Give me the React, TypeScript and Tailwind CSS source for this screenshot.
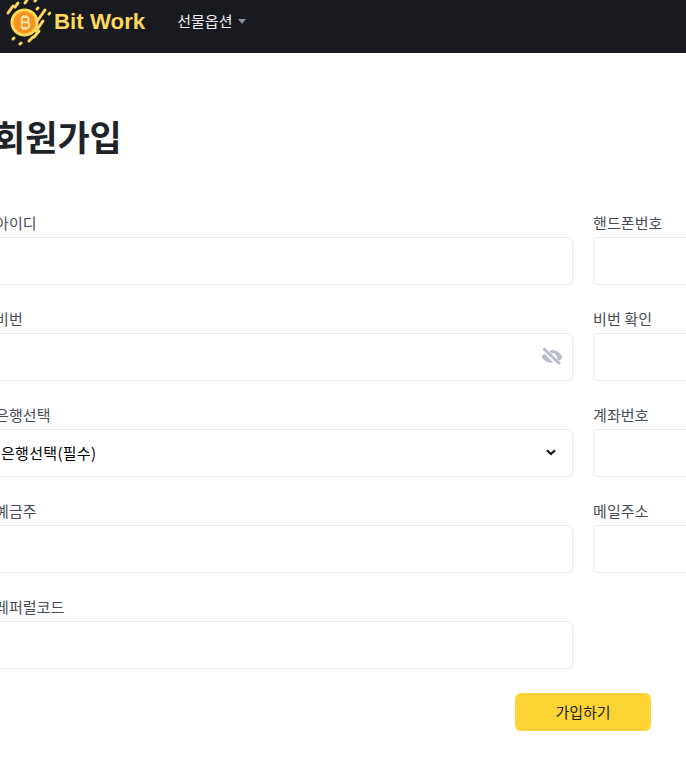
import React from "react";

const FONT = "font-['Noto_Sans_CJK_KR','Noto_Sans',sans-serif]";

function Logo() {
  return (
    <svg width="46" height="46" viewBox="0 0 46 46" className="shrink-0">
      <circle cx="19.5" cy="22.5" r="14" fill="#fcd85c" />
      <circle cx="19.5" cy="22.5" r="11" fill="#f7931a" />
      <path
        d="M16.5 17 h4.5 a2.6 2.6 0 0 1 0 5.4 h-4 m0 0 h4.6 a2.8 2.8 0 0 1 0 5.6 h-5.1 M16.8 17 v11 M18.5 15 v2 M21 15 v2 M18.5 28 v2 M21 28 v2"
        fill="none"
        stroke="#ffe2b0"
        strokeWidth="1.8"
      />
      <g stroke="#fcd85c" strokeWidth="3" strokeLinecap="round">
        <path d="M3 13 L8 6" />
        <path d="M10 7 L13 3" />
        <path d="M20 3 L22 0" />
        <path d="M30 1 L33 -3" />
        <path d="M32 9 L33 8" />
        <path d="M33 20 L40 10" />
        <path d="M31 31 L38 21" />
        <path d="M44 14 L45 13" />
        <path d="M29 37 L34 31" />
        <path d="M24 41 L28 37" />
        <path d="M8 39 L9 38" />
        <path d="M15 44 L16 43" />
      </g>
    </svg>
  );
}

function EyeOff() {
  return (
    <svg width="24" height="20" viewBox="0 0 24 20" className="absolute right-[9px] top-[14px]">
      <path d="M3.5 1.5 L20 17" fill="none" stroke="#b7bdc6" strokeWidth="3" />
      <path d="M9 3.5 C14 1.5 20 5 22.5 9.5 C21.8 11 20.8 12.5 19.5 13.8 L17 11.4 C17.5 8.5 14.5 5.5 11.5 6 Z" fill="#b7bdc6" />
      <path d="M4.5 6.5 L13 15.5 C8.5 16.5 3.8 13.5 1.5 9.8 C2.2 8.5 3.2 7.5 4.5 6.5 Z" fill="#b7bdc6" />
    </svg>
  );
}

function Field({ label, children }: { label: string; children?: React.ReactNode }) {
  return (
    <div className="flex flex-col">
      <label className="h-[24px] text-[15px] leading-[20px] tracking-[0.1px] text-[#474d57]">{label}</label>
      <div className="relative">
        {children ?? (
          <input className="block h-[48px] w-full rounded-[4px] border border-[#eaecef] bg-white px-3 outline-none" />
        )}
      </div>
    </div>
  );
}

export default function App() {
  return (
    <div className={`h-[767px] w-[686px] overflow-hidden bg-white ${FONT}`}>
      <header className="flex h-[53px] items-start bg-[#181a20]">
        <div className="ml-[5px] flex items-center">
          <Logo />
          <span className="ml-[3px] -translate-y-[1px] font-['Liberation_Sans',sans-serif] text-[22.3px] font-bold text-[#fcd85c]">Bit Work</span>
        </div>
        <nav className="ml-[32px] mt-[10px] flex items-center gap-[6px] text-[15px] text-[#eaecef]">
          <span>선물옵션</span>
          <span className="h-0 w-0 border-x-[4px] border-t-[5px] border-x-transparent border-t-[#848e9c]" />
        </nav>
      </header>
      <main className="-ml-[5px] w-[800px] pt-[59px]">
        <h1 className="-ml-[2px] h-[48px] text-[35px] font-bold leading-[48px] text-[#1e2329]">회원가입</h1>
        <form className="mt-[53px] grid w-[800px] grid-cols-[578px_200px] gap-x-[20px] gap-y-[24px]">
          <Field label="아이디" />
          <Field label="핸드폰번호" />
          <Field label="비번">
            <input
              type="password"
              className="block h-[48px] w-full rounded-[4px] border border-[#eaecef] bg-white px-3 outline-none"
            />
            <EyeOff />
          </Field>
          <Field label="비번 확인" />
          <Field label="은행선택">
            <select className="block h-[48px] w-full appearance-none rounded-[4px] border border-[#eaecef] bg-white pl-[5px] text-[15px] tracking-[0.3px] text-black outline-none">
              <option>은행선택(필수)</option>
            </select>
            <svg width="10" height="7" viewBox="0 0 10 7" className="pointer-events-none absolute right-[17px] top-[20px]">
              <path d="M1 1.2 L5 5 L9 1.2" fill="none" stroke="#111" strokeWidth="2" />
            </svg>
          </Field>
          <Field label="계좌번호" />
          <Field label="예금주" />
          <Field label="메일주소" />
          <Field label="레퍼럴코드" />
        </form>
        <div className="mt-[24px] ml-[520px]">
          <button
            type="button"
            className="h-[38px] w-[136px] rounded-[6px] bg-[#fcd535] text-[15px] text-[#1e2329]"
          >
            가입하기
          </button>
        </div>
      </main>
    </div>
  );
}
